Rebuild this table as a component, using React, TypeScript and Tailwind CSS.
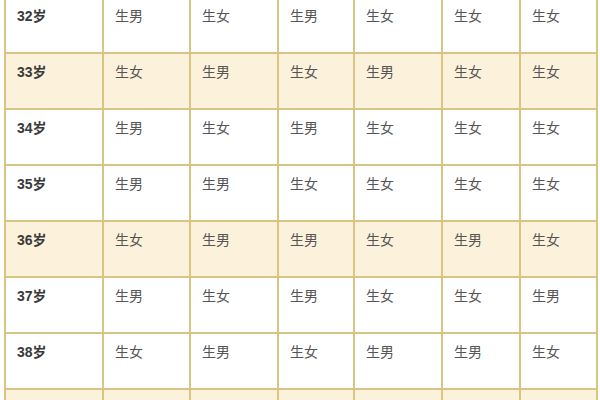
const COL_W = ['w-[98px]', 'w-[87px]', 'w-[88px]', 'w-[76px]', 'w-[88px]', 'w-[78px]', 'w-[77px]']

const ROWS: { age: string; cells: string[]; hl?: boolean }[] = [
  { age: '32岁', cells: ['生男', '生女', '生男', '生女', '生女', '生女'] },
  { age: '33岁', cells: ['生女', '生男', '生女', '生男', '生女', '生女'], hl: true },
  { age: '34岁', cells: ['生男', '生女', '生男', '生女', '生女', '生女'] },
  { age: '35岁', cells: ['生男', '生男', '生女', '生女', '生女', '生女'] },
  { age: '36岁', cells: ['生女', '生男', '生男', '生女', '生男', '生女'], hl: true },
  { age: '37岁', cells: ['生男', '生女', '生男', '生女', '生女', '生男'] },
  { age: '38岁', cells: ['生女', '生男', '生女', '生男', '生男', '生女'] },
  { age: '39岁', cells: ['生男', '生女', '生女', '生男', '生女', '生男'], hl: true },
]

export default function App() {
  return (
    <div
      className="w-[600px] h-[400px] overflow-hidden bg-white"
      style={{ fontFamily: '"Liberation Sans", "Noto Sans CJK SC", sans-serif' }}
    >
      <div className="ml-[4px] mt-[-4px] w-[594px] border-l-2 border-t-2 border-[#d8c584]">
        {ROWS.map((row) => (
          <div
            key={row.age}
            className={`flex h-[56px] border-b-2 border-[#d8c584] ${row.hl ? 'bg-[#fcf2dc]' : 'bg-white'}`}
          >
            <div className={`${COL_W[0]} shrink-0 border-r-2 border-[#d8c584] pl-[11px] pt-[8px] text-[14px] leading-[20px] font-bold text-[#3a3a3a]`}>
              {row.age}
            </div>
            {row.cells.map((c, i) => (
              <div
                key={i}
                className={`${COL_W[i + 1]} shrink-0 border-r-2 border-[#d8c584] pl-[11px] pt-[8px] text-[14px] leading-[20px] text-[#555555]`}
              >
                {c}
              </div>
            ))}
          </div>
        ))}
      </div>
    </div>
  )
}
